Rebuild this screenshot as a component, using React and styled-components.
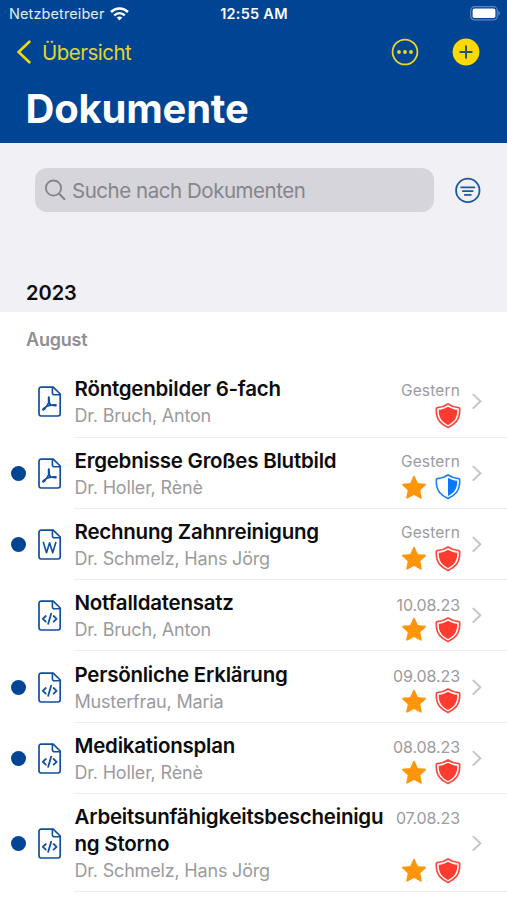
import React from 'react';
import styled, { createGlobalStyle, ThemeProvider } from 'styled-components';

const theme = {
  blue: '#004494',
  yellow: '#e2d52c',
  gray: '#8e8e93',
  lightGray: '#9b9b9d',
  panel: '#f1f0f5',
};

const documents = [
  { title: 'Röntgenbilder 6-fach', author: 'Dr. Bruch, Anton', date: 'Gestern', type: 'pdf', shield: 'red' },
  { title: 'Ergebnisse Großes Blutbild', author: 'Dr. Holler, Rènè', date: 'Gestern', type: 'pdf', unread: true, star: true, shield: 'blue' },
  { title: 'Rechnung Zahnreinigung', author: 'Dr. Schmelz, Hans Jörg', date: 'Gestern', type: 'word', unread: true, star: true, shield: 'red' },
  { title: 'Notfalldatensatz', author: 'Dr. Bruch, Anton', date: '10.08.23', type: 'code', star: true, shield: 'red' },
  { title: 'Persönliche Erklärung', author: 'Musterfrau, Maria', date: '09.08.23', type: 'code', unread: true, star: true, shield: 'red' },
  { title: 'Medikationsplan', author: 'Dr. Holler, Rènè', date: '08.08.23', type: 'code', unread: true, star: true, shield: 'red' },
  { title: 'Arbeitsunfähigkeitsbescheinigung Storno', author: 'Dr. Schmelz, Hans Jörg', date: '07.08.23', type: 'code', unread: true, star: true, shield: 'red', tall: true },
];

function WifiIcon() {
  return (
    <svg width="19" height="14" viewBox="0 0 19 14" fill="none" stroke="#fff" strokeWidth="2.5">
      <path d="M1 5C5.8 0.4 13.2 0.4 18 5" />
      <path d="M4.2 8.3C7.3 5.4 11.7 5.4 14.8 8.3" />
      <path d="M6.7 10.5C8.3 9.1 10.7 9.1 12.3 10.5L9.5 13.4Z" fill="#fff" stroke="none" />
    </svg>
  );
}

function BatteryIcon() {
  return (
    <svg width="31" height="15" viewBox="0 0 31 15">
      <rect x="0.7" y="0.7" width="26.6" height="13.2" rx="3.8" fill="none" stroke="#5d87bc" strokeWidth="1.2" />
      <rect x="2.6" y="2.6" width="22.8" height="9.4" rx="1.8" fill="#fff" />
      <path d="M28.4 5.1C30.4 5.8 30.4 8.8 28.4 9.5Z" fill="#6d93c2" />
    </svg>
  );
}

function BackIcon() {
  return (
    <svg width="16" height="24" viewBox="0 0 16 24" fill="none" stroke="#f2d810" strokeWidth="2.6">
      <path d="M13.4 1.7L2.6 12L13.4 22.3" strokeLinecap="round" strokeLinejoin="miter" />
    </svg>
  );
}

function MoreIcon() {
  return (
    <svg width="28" height="28" viewBox="0 0 28 28" fill="#f0d81c">
      <circle cx="14" cy="14" r="12.4" fill="none" stroke="#e9d52a" strokeWidth="1.8" />
      <circle cx="8" cy="14" r="1.9" />
      <circle cx="14" cy="14" r="1.9" />
      <circle cx="20" cy="14" r="1.9" />
    </svg>
  );
}

function AddIcon() {
  return (
    <svg width="28" height="28" viewBox="0 0 28 28">
      <circle cx="14" cy="14" r="13.4" fill="#ffd900" />
      <path d="M14 8.3V19.7M8.3 14H19.7" stroke="#20546f" strokeWidth="2" strokeLinecap="round" />
    </svg>
  );
}

function SearchIcon() {
  return (
    <svg width="21" height="22" viewBox="0 0 21 22" fill="none" stroke="#85858b" strokeLinecap="round">
      <circle cx="8.5" cy="9.1" r="7.6" strokeWidth="1.8" />
      <path d="M14.2 14.8L19.3 20" strokeWidth="2.3" />
    </svg>
  );
}

function FilterIcon() {
  return (
    <svg width="26" height="26" viewBox="0 0 26 26" fill="none" stroke="#1c58a3" strokeLinecap="round">
      <circle cx="12.8" cy="13.4" r="11.7" strokeWidth="1.8" />
      <path d="M6.1 10.3H19.5M7.9 14.1H17.7M9.8 17.9H15.8" strokeWidth="1.8" />
    </svg>
  );
}

function FileIcon({ type }) {
  return (
    <svg width="24" height="31" viewBox="0 0 24 31" fill="none" stroke="#124f9c" strokeWidth="1.7" strokeLinejoin="round" strokeLinecap="round">
      <path d="M3.2 1.2H15.2L22.2 8V27.8Q22.2 30 20 30H3.2Q1 30 1 27.8V3.4Q1 1.2 3.2 1.2Z" />
      <path d="M14.4 1.4V6.8Q14.4 8.8 16.4 8.8H22" strokeWidth="1.6" />
      {type === 'pdf' && (
        <>
          <path d="M10.8 11.2V14.2C10.8 15.8 11 17 12 18.2" strokeWidth="2.1" />
          <path d="M11.2 14C10.8 17.6 9 20.6 5.4 23.4" strokeWidth="1.7" />
          <path d="M8 20.6C10.8 19.2 14 18.6 17.8 19" strokeWidth="1.6" />
          <path d="M5.2 23.5L7 22M15.2 19.2L17.6 19.4" strokeWidth="2.3" />
        </>
      )}
      {type === 'word' && <path d="M5.4 13.4L8.5 23.8L11.6 13.8L14.7 23.8L17.8 13.4" strokeWidth="1.6" />}
      {type === 'code' && <path d="M7.8 16L4.8 18.8L7.8 21.6M15.6 16L18.6 18.8L15.6 21.6M13.2 13.6L10.2 23.8" strokeWidth="1.8" />}
    </svg>
  );
}

function StarIcon() {
  return (
    <svg width="26" height="25" viewBox="0 0 26 25">
      <path
        d="M13 1.6L16.3 8.8L24.2 9.6L18.4 14.9L20 22.9L13 19L6 22.9L7.6 14.9L1.8 9.6L9.7 8.8Z"
        fill="#ff9509"
        stroke="#ff9509"
        strokeWidth="1.6"
        strokeLinejoin="round"
      />
    </svg>
  );
}

function ShieldIcon({ color }) {
  const outline = 'M13 1C10.2 3 6.6 4.2 2.4 4.6Q1.4 4.7 1.3 5.7C1.1 10.6 1.9 15 4.6 18.4C6.8 21.2 9.8 23 13 24.5C16.2 23 19.2 21.2 21.4 18.4C24.1 15 24.9 10.6 24.7 5.7Q24.6 4.7 23.6 4.6C19.4 4.2 15.8 3 13 1Z';
  const inner = 'M13 3.7C10.5 5.3 7.5 6.3 3.8 6.8C3.7 10.8 4.4 14.4 6.5 17.1C8.2 19.3 10.5 20.8 13 22C15.5 20.8 17.8 19.3 19.5 17.1C21.6 14.4 22.3 10.8 22.2 6.8C18.5 6.3 15.5 5.3 13 3.7Z';
  if (color === 'blue') {
    return (
      <svg width="26" height="26" viewBox="0 0 26 26">
        <path d={outline} fill="none" stroke="#1a80f8" strokeWidth="1.6" />
        <path d="M13 3.7C15.5 5.3 18.5 6.3 22.2 6.8C22.3 10.8 21.6 14.4 19.5 17.1C17.8 19.3 15.5 20.8 13 22Z" fill="#0a78f8" />
      </svg>
    );
  }
  return (
    <svg width="26" height="26" viewBox="0 0 26 26">
      <path d={outline} fill="#fff" stroke="#fb4a42" strokeWidth="1.7" />
      <path d={inner} fill="#ff3b30" />
    </svg>
  );
}

function Chevron() {
  return (
    <svg width="10" height="16" viewBox="0 0 10 16" fill="none" stroke="#c4c4c7" strokeWidth="1.9">
      <path d="M1.4 1.6L8.4 8.3L1.4 15" strokeLinecap="round" />
    </svg>
  );
}

function DocumentRow({ item }) {
  return (
    <Row $tall={item.tall}>
      <DotCell>{item.unread && <Dot />}</DotCell>
      <FileIcon type={item.type} />
      <RowBody>
        <RowText>
          <Title>{item.title}</Title>
          <Author>{item.author}</Author>
        </RowText>
        <Meta>
          <DateText $numeric={item.date !== 'Gestern'}>{item.date}</DateText>
          <Badges>
            {item.star && <StarIcon />}
            <ShieldIcon color={item.shield} />
          </Badges>
        </Meta>
        <Chevron />
      </RowBody>
    </Row>
  );
}

function App() {
  return (
    <ThemeProvider theme={theme}>
      <GlobalStyle />
      <Screen>
        <Header>
          <StatusBar>
            <Carrier>
              Netzbetreiber
              <WifiIcon />
            </Carrier>
            <Clock>12:55 AM</Clock>
            <Battery>
              <BatteryIcon />
            </Battery>
          </StatusBar>
          <NavBar>
            <BackLink>
              <BackIcon />
              Übersicht
            </BackLink>
            <Actions>
              <MoreIcon />
              <AddIcon />
            </Actions>
          </NavBar>
          <Heading>Dokumente</Heading>
        </Header>
        <Panel>
          <SearchBar>
            <SearchField>
              <SearchIcon />
              <span>Suche nach Dokumenten</span>
            </SearchField>
            <FilterIcon />
          </SearchBar>
          <Year>2023</Year>
        </Panel>
        <Month>August</Month>
        {documents.map((item) => (
          <DocumentRow key={item.title} item={item} />
        ))}
      </Screen>
    </ThemeProvider>
  );
}

const GlobalStyle = createGlobalStyle`
  * {
    box-sizing: border-box;
  }

  body {
    margin: 0;
    background: #fff;
    font-family: Inter, "Liberation Sans", sans-serif;
  }

  svg {
    display: block;
    flex-shrink: 0;
  }
`;

const Screen = styled.main`
  width: 507px;
  height: 900px;
  overflow: hidden;
  background: #fff;
`;

const Header = styled.header`
  height: 142.5px;
  background: ${({ theme }) => theme.blue};
`;

const StatusBar = styled.div`
  display: grid;
  grid-template-columns: 1fr auto 1fr;
  align-items: center;
  height: 27px;
  padding: 0 6px 0 9px;
  color: #fff;
  font-size: 14.5px;
`;

const Carrier = styled.div`
  display: flex;
  align-items: center;
  gap: 6px;
  color: #e3ebf5;
  letter-spacing: 0.1px;
`;

const Clock = styled.div`
  padding-right: 2px;
  font-weight: 600;
  letter-spacing: 0.25px;
`;

const Battery = styled.div`
  display: flex;
  justify-content: flex-end;
`;

const NavBar = styled.nav`
  display: flex;
  align-items: center;
  justify-content: space-between;
  height: 50px;
  padding: 0 27px 0 16px;
`;

const BackLink = styled.div`
  display: flex;
  align-items: center;
  gap: 10px;
  color: ${({ theme }) => theme.yellow};
  font-size: 20.5px;
  letter-spacing: -0.5px;
`;

const Actions = styled.div`
  display: flex;
  gap: 33px;
`;

const Heading = styled.h1`
  margin: 0;
  padding-left: 25.5px;
  color: #fff;
  font-size: 40px;
  font-weight: 700;
  line-height: 63px;
  letter-spacing: -0.2px;
`;

const Panel = styled.section`
  height: 169.5px;
  padding-top: 25.5px;
  background: ${({ theme }) => theme.panel};
`;

const SearchBar = styled.div`
  display: flex;
  align-items: center;
  gap: 21px;
  padding-left: 35px;
`;

const SearchField = styled.div`
  display: flex;
  align-items: center;
  gap: 6px;
  width: 399px;
  height: 44px;
  padding-left: 10px;
  border-radius: 12px;
  background: #d6d5db;
  color: #85858b;
  font-size: 20.5px;
  letter-spacing: -0.46px;
`;

const Year = styled.h2`
  margin: 68px 0 0 26px;
  font-size: 20px;
  font-weight: 600;
  line-height: 27px;
  color: #0c0c0d;
`;

const Month = styled.h3`
  margin: 0;
  height: 54.3px;
  padding-left: 26px;
  color: ${({ theme }) => theme.gray};
  font-size: 18px;
  font-weight: 600;
  line-height: 55px;
  letter-spacing: -0.2px;
`;

const Row = styled.article`
  display: flex;
  align-items: center;
  height: ${({ $tall }) => ($tall ? '98.3px' : '71.3px')};
`;

const DotCell = styled.div`
  width: 37.5px;
  padding-left: 10.5px;
`;

const Dot = styled.div`
  width: 15px;
  height: 15px;
  border-radius: 50%;
  background: ${({ theme }) => theme.blue};
`;

const RowBody = styled.div`
  display: flex;
  align-items: center;
  flex: 1;
  height: 100%;
  margin-left: 12.5px;
  padding-right: 25px;
  border-bottom: 1.5px solid #ededee;
`;

const RowText = styled.div`
  width: 310px;
  padding: 2px 0 0 0.5px;
`;

const Title = styled.div`
  color: #0c0c0d;
  font-size: 20.5px;
  font-weight: 600;
  line-height: 27px;
  letter-spacing: -0.23px;
  word-break: break-all;
`;

const Author = styled.div`
  color: ${({ theme }) => theme.lightGray};
  font-size: 18px;
  line-height: 27px;
  letter-spacing: -0.18px;
`;

const Meta = styled.div`
  display: flex;
  flex-direction: column;
  align-items: flex-end;
  justify-content: space-between;
  flex: 1;
  height: 100%;
  margin-right: 11.5px;
  padding: 12.4px 0 7.6px;
`;

const DateText = styled.time`
  padding-right: 0.5px;
  color: ${({ theme }) => theme.lightGray};
  font-size: ${({ $numeric }) => ($numeric ? '16px' : '15.5px')};
  line-height: 24px;
  letter-spacing: ${({ $numeric }) => ($numeric ? '-0.1px' : '0.15px')};
`;

const Badges = styled.div`
  display: flex;
  align-items: center;
  gap: 8px;
`;

export default App;
